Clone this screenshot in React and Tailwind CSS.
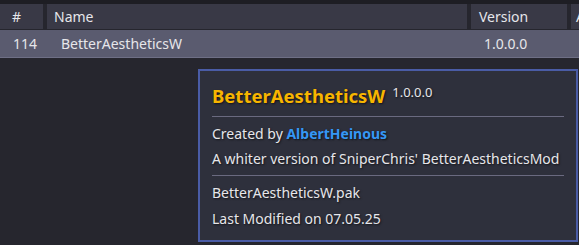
export default function App() {
  const font = { fontFamily: '"Noto Sans", "Open Sans", sans-serif' };
  return (
    <div className="w-[579px] h-[245px] overflow-hidden bg-[#26262e] text-[#e6e6ea]" style={font}>
      <div className="h-[4px] bg-[#1e1e24]" />
      <div className="flex h-[25px] gap-[4px] text-[14px] bg-[#26262e]">
        <div className="w-[43px] shrink-0 bg-[#393946] pl-[12px] flex items-center">#</div>
        <div className="w-[420px] shrink-0 bg-[#393946] pl-[7px] flex items-center">Name</div>
        <div className="w-[96px] shrink-0 bg-[#393946] pl-[8px] flex items-center">Version</div>
        <div className="w-[20px] shrink-0 bg-[#393946] pl-[5px] flex items-center">A</div>
      </div>
      <div className="flex h-[28px] items-center text-[14px] bg-[#5a5b6f] border-b border-[#6e6f85] mt-[1px]">
        <div className="w-[47px] shrink-0 pl-[13px]">114</div>
        <div className="w-[424px] shrink-0 pl-[14px]">BetterAestheticsW</div>
        <div className="pl-[13px]">1.0.0.0</div>
      </div>
      <div className="ml-[198px] mt-[11px] w-[380px] h-[173px] border-2 border-[#4a5ca6] bg-[#2e303c] px-[12px] pt-[13px] text-[14px] [text-shadow:1px_1px_2px_rgba(0,0,0,0.6)]">
        <div className="flex items-start gap-[7px]">
          <span className="text-[18.5px] font-bold text-[#f7b500] leading-[24px]">BetterAestheticsW</span>
          <span className="text-[13px] leading-[16px]">1.0.0.0</span>
        </div>
        <div className="h-px bg-[#6a6a80] mt-[8px]" />
        <div className="mt-[7px] leading-[20px]">
          Created by <span className="font-bold text-[#3597f5]">AlbertHeinous</span>
        </div>
        <div className="mt-[5px] leading-[20px]">A whiter version of SniperChris' BetterAestheticsMod</div>
        <div className="h-px bg-[#6a6a80] mt-[6px]" />
        <div className="mt-[7px] leading-[20px]">BetterAestheticsW.pak</div>
        <div className="mt-[6px] leading-[20px]">Last Modified on 07.05.25</div>
      </div>
    </div>
  );
}
